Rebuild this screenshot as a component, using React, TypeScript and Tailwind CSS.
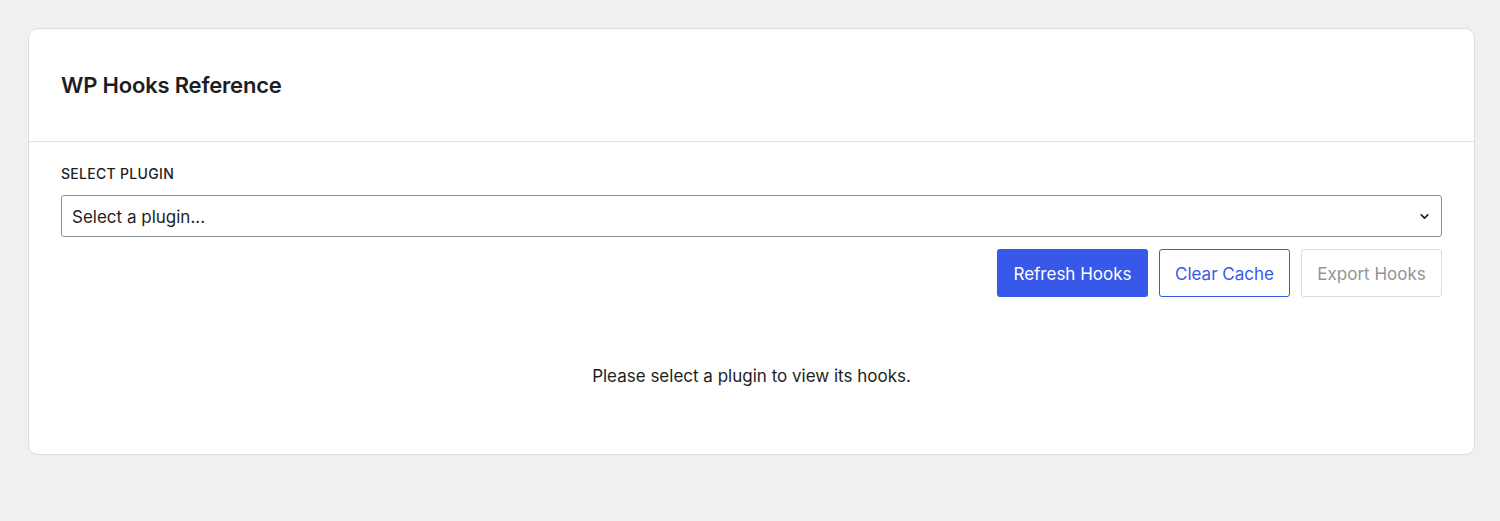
import { ChevronDown } from "lucide-react"

export default function App() {
    return (
        <div className="min-h-[521px] bg-[#f0f0f1] pt-[28px] px-[28px] font-['Inter',sans-serif] text-[#1e1e1e]">
            <div className="w-[1447px] bg-white border border-[#dcdcde] rounded-[10px]">
                <div className="px-[32px] py-[42px] border-b border-[#e0e0e0]">
                    <h1 className="text-[22px] leading-[28px] font-semibold tracking-[-0.2px]">WP Hooks Reference</h1>
                </div>
                <div className="px-[32px] pt-[22px]">
                    <label className="block text-[14px] leading-[20px] uppercase tracking-[0.3px] font-medium">Select plugin</label>
                    <div className="relative mt-[11px]">
                        <div className="h-[42px] border border-[#8c8f94] rounded-[3px] flex items-center pl-[10px] pt-[3px] text-[17px]">
                            Select a plugin...
                        </div>
                        <ChevronDown className="absolute right-[11px] top-[15px] w-[13px] h-[13px]" strokeWidth={3} />
                    </div>
                    <div className="flex justify-end gap-[11px] mt-[12px]">
                        <button className="h-[48px] w-[151px] pt-[3px] rounded-[3px] bg-[#3858e9] text-white text-[17px]">Refresh Hooks</button>
                        <button className="h-[48px] w-[131px] pt-[3px] rounded-[3px] border border-[#3858e9] text-[#3858e9] text-[17px]">Clear Cache</button>
                        <button className="h-[48px] w-[141px] pt-[3px] rounded-[3px] border border-[#dcdcde] text-[#949494] text-[17px]">Export Hooks</button>
                    </div>
                    <div className="h-[157px] pt-[3px] flex items-center justify-center text-[17px]">
                        Please select a plugin to view its hooks.
                    </div>
                </div>
            </div>
        </div>
    )
}
